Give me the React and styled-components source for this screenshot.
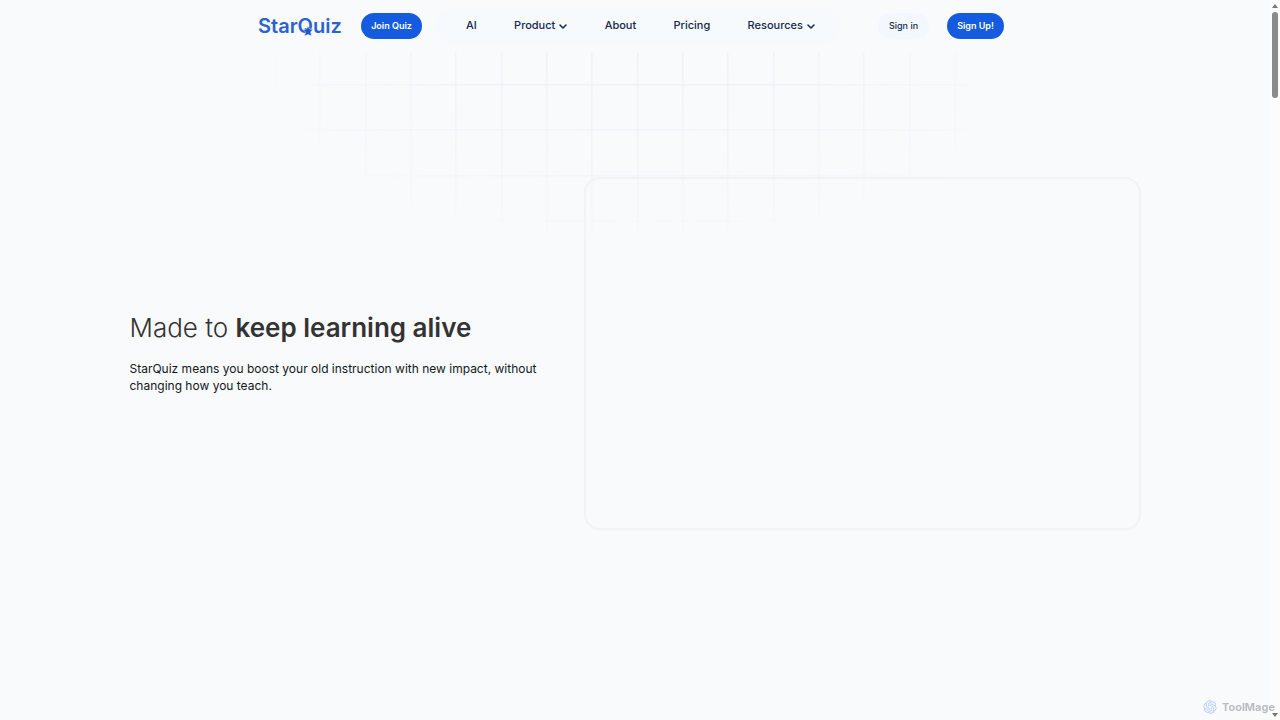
import React from 'react'
import styled, { createGlobalStyle } from 'styled-components'
import { RiOpenaiFill } from 'react-icons/ri'

const GlobalStyle = createGlobalStyle`
  * {
    box-sizing: border-box;
  }

  body {
    margin: 0;
    background: #f9fafc;
    color: #0d1b2a;
    font-family: Inter, 'Liberation Sans', sans-serif;
  }

  a {
    color: inherit;
    text-decoration: none;
  }
`

const Page = styled.div`
  position: relative;
  display: flex;
  flex-direction: column;
  min-height: 100vh;
  padding-right: 10px;
  overflow: hidden;
`

const Header = styled.header`
  display: flex;
  justify-content: center;
  align-items: center;
  height: 52px;
  padding-right: 8px;
`

const Logo = styled.a`
  position: relative;
  width: 82px;
  color: #2a63cf;
  font-size: 20px;
  line-height: 24px;
  font-weight: 600;
  white-space: nowrap;
`

const LogoStar = styled.svg`
  position: absolute;
  left: 44px;
  top: 11px;
  width: 12px;
  height: 12px;
`

const Pill = styled.button`
  height: 26px;
  padding: 0 0 2px;
  border: 0;
  border-radius: 13px;
  width: ${({ $width }) => $width}px;
  background: ${({ $primary }) => ($primary ? '#155bdf' : '#f3f8fe')};
  color: ${({ $primary }) => ($primary ? '#ffffff' : '#1b2c48')};
  font-family: inherit;
  font-size: 9px;
  font-weight: ${({ $primary }) => ($primary ? 600 : 500)};
`

const Nav = styled.nav`
  display: flex;
  justify-content: space-between;
  align-items: center;
  width: 404px;
  height: 36px;
  margin: 0 38px 0 14px;
  padding: 0 25px 2px 30px;
  border-radius: 18px;
  background: #f6fafd;
`

const NavItem = styled.a`
  display: flex;
  align-items: center;
  gap: 4px;
  color: #14284b;
  font-size: 11px;
  line-height: 16px;
  font-weight: 500;
`

const Actions = styled.div`
  display: flex;
  gap: 18px;
`

const JoinSlot = styled.div`
  margin-left: 21px;
`

const Grid = styled.svg`
  position: absolute;
  top: 53px;
  left: 50%;
  width: 770px;
  height: 190px;
  margin-left: -393px;
  pointer-events: none;
`

const Hero = styled.main`
  display: grid;
  grid-template-columns: 414px minmax(0, 1fr);
  gap: 40px;
  align-items: center;
  width: 100%;
  max-width: 1011px;
  margin: 125px auto 0;
`

const Title = styled.h1`
  margin: 0 0 14px;
  color: #333333;
  font-size: 26px;
  line-height: 36px;
  font-weight: 300;
  white-space: nowrap;

  strong {
    font-weight: 600;
  }
`

const Lead = styled.p`
  margin: 0 0 4px;
  color: #101820;
  font-size: 12px;
  line-height: 17px;
  font-weight: 400;
`

const Card = styled.div`
  position: relative;
  height: 353px;
  border: 2px solid #f1f3f5;
  border-radius: 16px;
  box-shadow: 0 1px 2px rgba(20, 30, 40, 0.02);
`

const Scrollbar = styled.div`
  position: fixed;
  top: 0;
  right: 0;
  bottom: 0;
  display: flex;
  flex-direction: column;
  align-items: center;
  width: 10px;
  padding: 4px 0 3px;
  background: #fcfcfd;
`

const Thumb = styled.div`
  width: 6px;
  height: 86px;
  margin: 4px 0 auto;
  border-radius: 3px;
  background: #8b8b8b;
`

const Watermark = styled.div`
  position: fixed;
  right: 5px;
  bottom: 4px;
  display: flex;
  align-items: center;
  gap: 4px;
  color: #b9bcc0;
  font-size: 11px;
  line-height: 18px;
  font-weight: 700;
`

const Chevron = () => (
  <svg width="8" height="8" viewBox="0 0 8 8" fill="none" aria-hidden="true">
    <path d="M1 4l3 3 3-3" stroke="currentColor" strokeWidth="1.5" strokeLinecap="round" strokeLinejoin="round" />
  </svg>
)

const Arrow = ({ down }) => (
  <svg width="6" height="4" viewBox="0 0 6 4" aria-hidden="true">
    <path d={down ? 'M0 0h6L3 4z' : 'M0 4h6L3 0z'} fill="#777777" />
  </svg>
)

const links = [
  { label: 'AI' },
  { label: 'Product', menu: true },
  { label: 'About' },
  { label: 'Pricing' },
  { label: 'Resources', menu: true }
]

// the middle line of the 17 is the strongest one
const columns = Array.from({ length: 17 }, (_, i) => 28 + (i * 136) / 3)
const rows = [32, 77, 123, 168]

export default () => {
  return (
    <>
      <GlobalStyle />
      <Page>
        <Grid viewBox="0 0 770 190" aria-hidden="true">
          <defs>
            <radialGradient id="fade" gradientUnits="userSpaceOnUse" cx="0" cy="0" r="1" gradientTransform="translate(390 0) scale(390 200)">
              <stop offset="0" stopColor="#fff" />
              <stop offset="0.5" stopColor="#fff" stopOpacity="0.7" />
              <stop offset="1" stopColor="#fff" stopOpacity="0" />
            </radialGradient>
            <mask id="gridMask">
              <rect width="770" height="190" fill="url(#fade)" />
            </mask>
          </defs>
          <g mask="url(#gridMask)" fill="#eff1f3">
            {columns.map(x => <rect key={x} x={Math.round(x) - 1} y="0" width="1.5" height="180" />)}
            {rows.map(y => <rect key={y} x="0" y={y - 1} width="770" height="1.5" />)}
          </g>
        </Grid>
        <Header>
          <Logo href="#">
            StarQuiz
            <LogoStar viewBox="0 0 24 24" aria-hidden="true">
              <path d="M12 2l3 6 7 1-5 5 2 8-7-3-7 3 2-8-5-5 7-1z" fill="#1f58c7" stroke="#f9fafc" strokeWidth="1" />
            </LogoStar>
          </Logo>
          <JoinSlot>
            <Pill $primary $width={61}>Join Quiz</Pill>
          </JoinSlot>
          <Nav>
            {links.map(({ label, menu }) => (
              <NavItem key={label} href="#">
                {label}
                {menu && <Chevron />}
              </NavItem>
            ))}
          </Nav>
          <Actions>
            <Pill $width={51}>Sign in</Pill>
            <Pill $primary $width={57}>Sign Up!</Pill>
          </Actions>
        </Header>
        <Hero>
          <div>
            <Title>Made to <strong>keep learning alive</strong></Title>
            <Lead>StarQuiz means you boost your old instruction with new impact, without changing how you teach.</Lead>
          </div>
          <Card />
        </Hero>
      </Page>
      <Scrollbar aria-hidden="true">
        <Arrow />
        <Thumb />
        <Arrow down />
      </Scrollbar>
      <Watermark>
        <RiOpenaiFill size={16} color="#b5cdf5" aria-hidden="true" />
        ToolMage
      </Watermark>
    </>
  )
}
